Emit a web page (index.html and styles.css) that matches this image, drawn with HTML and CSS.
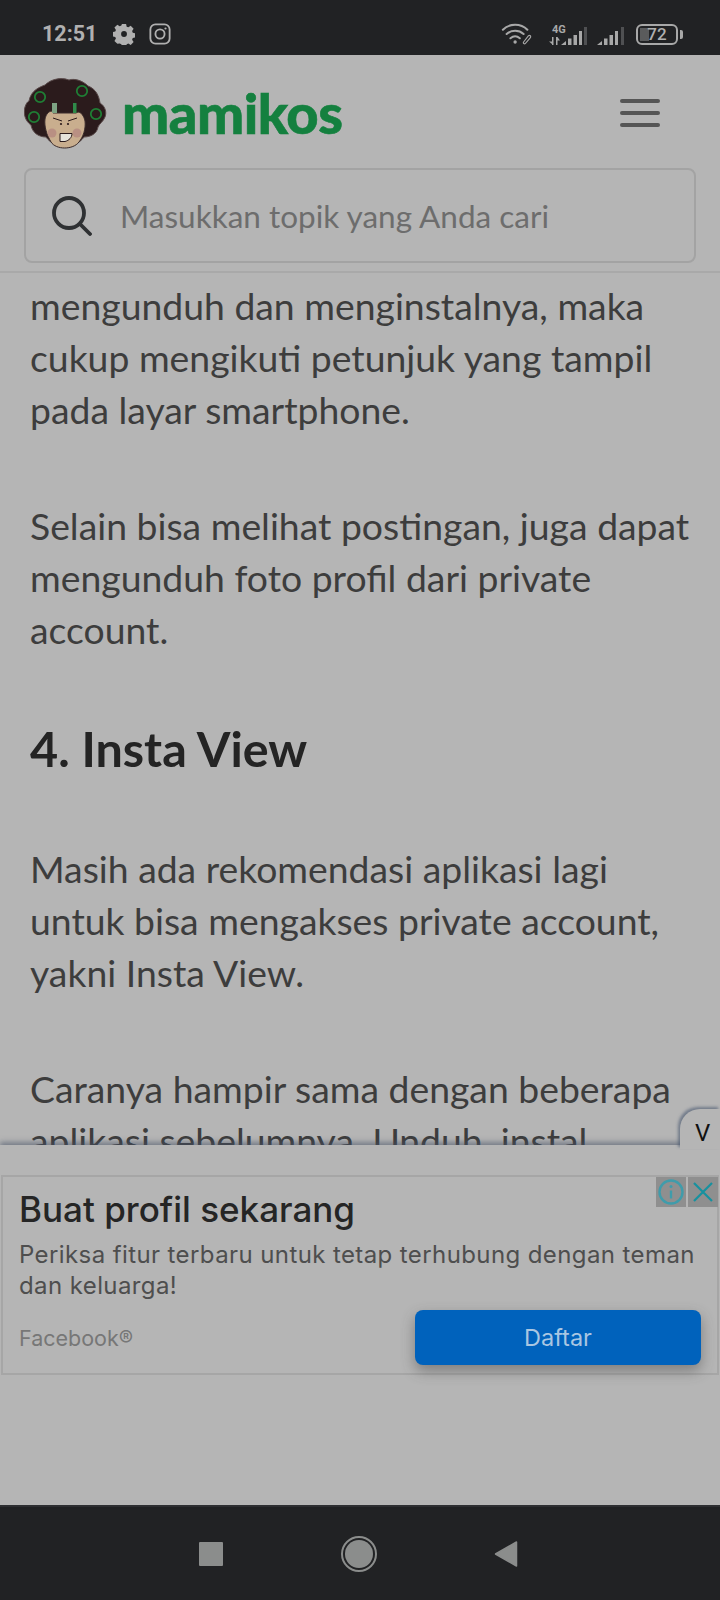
FILE: index.html
```html
<!DOCTYPE html>
<html lang="id">
<head>
<meta charset="utf-8">
<title>Mamikos</title>
<link rel="stylesheet" href="styles.css">
</head>
<body>
<div class="phone">
  <div class="status">
    <div class="status-left">
      <span class="clock">12:51</span>
      <svg class="ic-gear" width="22" height="22" viewBox="0 0 24 24"><path fill="#b0b0b0" fill-rule="evenodd" d="M9.500 0h5l.7 3.200 2 .8 2.800-1.800 3.500 3.500-1.800 2.800.8 2 3.200.7v5l-3.200.7-.8 2 1.800 2.800-3.500 3.500-2.800-1.800-2 .8-.7 3.200h-5l-.7-3.200-2-.8L4 23.800.500 20.300l1.800-2.800-.8-2L-1.700 14.800v-5l3.200-.7.8-2L.500 4.300 4 .800l2.800 1.800 2-.8zM12 8.500a3.500 3.500 0 1 0 0 7 3.500 3.500 0 0 0 0-7z" transform="translate(1.100 1.100) scale(.91)"/></svg>
      <svg class="ic-insta" width="22" height="22" viewBox="0 0 24 24" fill="none" stroke="#b0b0b0" stroke-width="2"><rect x="1.500" y="1.500" width="21" height="21" rx="5.500"/><circle cx="12" cy="12" r="5"/><circle cx="18" cy="6" r="1.200" fill="#b0b0b0" stroke="none"/></svg>
    </div>
    <div class="status-right">
      <svg class="wifi" width="32" height="22" viewBox="0 0 34 23" fill="none" stroke="#a8a8a8" stroke-width="2.200" stroke-linecap="round"><path d="M2 7c7-7 19-7 26 0"/><path d="M6 11.500c5-4.500 13-4.500 18 0"/><path d="M10 16c3-2.500 7-2.500 10 0"/><circle cx="15" cy="20" r="1.800" fill="#a8a8a8" stroke="none"/><path stroke-width="1.200" d="M24 20l5-6.500c1.500-1.500 3.500.5 2 2l-5 6c-1.200 1.200-2.800-.3-2-1.500z"/></svg>
      <div class="signal-4g">
        <span class="tag-4g">4G</span>
        <svg width="38" height="20" viewBox="0 0 38 20"><path fill="#a8a8a8" d="M3 11h1.500v8H3zM0 15.500h3v2.500zM7 11h1.500v8H7zM8.500 11l2.500 3.500H8.500z"/><path fill="#a8a8a8" d="M12 19l5-4v4zM19 12.500h3.500V19H19zM24.500 9h3.500v10h-3.500zM30 5h3v14h-3z"/><rect x="35" y="1" width="3" height="18" fill="#4f5052"/></svg>
      </div>
      <svg class="signal" width="27" height="20" viewBox="0 0 27 20"><path fill="#a8a8a8" d="M0 19l5-4v4zM7 12.500h3.500V19H7zM12.500 9H16v10h-3.500zM18 5h3v14h-3z"/><rect x="24" y="1" width="3" height="18" fill="#4f5052"/></svg>
      <div class="battery"><span class="battery-fill"></span><span class="battery-num">72</span></div>
      <span class="battery-tip"></span>
    </div>
  </div>

  <header class="site-header">
    <div class="brand-row">
      <div class="brand">
        <svg class="mascot" width="84" height="72" viewBox="0 0 84 72">
          <path fill="#2b1b1c" stroke="#5a4a4a" stroke-width="1" d="M5 24C7 13 16 10 21 8 27 2 37 0 45 3 51 1 59 4 64 9 72 12 75 19 76 26 81 29 83 35 81 40 79 45 75 47 74 50 73 57 66 60 60 60 52 72 30 72 22 60 14 60 8 55 7 48 1 44-1 36 1 30 2 27 3 25 5 24Z"/>
          <path fill="#c9ae8e" stroke="#3a2b2b" stroke-width="1" d="M21 42C22 37 25 34 28 34L29 36H52L54 35C57 35 60 39 61 44 62 52 59 60 55 65 49 73 32 73 27 65 23 58 20 50 21 42Z"/>
          <rect x="28" y="26" width="5" height="10" fill="#7da383"/>
          <rect x="49" y="26" width="3.500" height="10" fill="#2f8a49"/>
          <circle cx="16" cy="20" r="5.200" fill="none" stroke="#1f7f35" stroke-width="1.800"/>
          <circle cx="58" cy="14" r="5.200" fill="none" stroke="#1f7f35" stroke-width="1.800"/>
          <circle cx="10" cy="40" r="5.200" fill="none" stroke="#1f7f35" stroke-width="1.800"/>
          <circle cx="72" cy="37" r="5.200" fill="none" stroke="#1f7f35" stroke-width="1.800"/>
          <circle cx="28" cy="56" r="4.500" fill="#b99083"/>
          <circle cx="53" cy="56" r="4.500" fill="#b99083"/>
          <path fill="none" stroke="#2b1b1c" stroke-width="1" d="M29 41l9 3M44 44l9-3"/>
          <circle cx="37" cy="47" r="1.100" fill="#2b1b1c"/><circle cx="44" cy="47" r="1.100" fill="#2b1b1c"/>
          <path fill="#e6e3da" stroke="#2b1b1c" stroke-width="1" d="M36 56.500h12c0 4-3 7-7 8h-5z"/>
        </svg>
        <span class="wordmark">mamikos</span>
      </div>
      <div class="burger"><span></span><span></span><span></span></div>
    </div>
    <div class="search">
      <svg width="40" height="40" viewBox="0 0 40 40" fill="none" stroke="#2f3133" stroke-width="3.800" stroke-linecap="round"><circle cx="17" cy="17" r="15"/><path d="M28.500 28.500l9.500 9.500"/></svg>
      <span class="search-text">Masukkan topik yang Anda cari</span>
    </div>
  </header>

  <main class="article">
    <p>mengunduh dan menginstalnya, maka cukup mengikuti petunjuk yang tampil pada layar smartphone.</p>
    <p>Selain bisa melihat postingan, juga dapat mengunduh foto profil dari private account.</p>
    <h2>4. Insta View</h2>
    <p>Masih ada rekomendasi aplikasi lagi untuk bisa mengakses private account, yakni Insta View.</p>
    <p>Caranya hampir sama dengan beberapa aplikasi sebelumnya. Unduh, instal</p>
  </main>

  <section class="sheet">
    <div class="toggle">V</div>
    <div class="ad">
      <div class="ad-controls">
        <span class="ad-btn"><svg width="26" height="26" viewBox="0 0 26 26" fill="none" stroke="#3f9cab" stroke-width="2.400"><circle cx="13" cy="13" r="11.500"/><path d="M13 11.500v8"/><circle cx="13" cy="7.500" r="1.500" fill="#3f9cab" stroke="none"/></svg></span>
        <span class="ad-btn"><svg width="20" height="20" viewBox="0 0 20 20" fill="none" stroke="#17919f" stroke-width="2.200"><path d="M1 1l18 18M19 1L1 19"/></svg></span>
      </div>
      <h3 class="ad-title">Buat profil sekarang</h3>
      <p class="ad-body">Periksa fitur terbaru untuk tetap terhubung dengan teman dan keluarga!</p>
      <div class="ad-foot">
        <span class="ad-brand">Facebook®</span>
        <span class="ad-cta">Daftar</span>
      </div>
    </div>
  </section>

  <nav class="navbar">
    <span class="nav-square"></span>
    <span class="nav-home"><span></span></span>
    <svg width="24" height="26" viewBox="0 0 24 26"><path fill="#8b8d8c" stroke="#8b8d8c" stroke-width="1.500" stroke-linejoin="round" d="M1.500 13L22.500 1v24z"/></svg>
  </nav>
</div>
</body>
</html>
```

FILE: styles.css
```css
* { box-sizing: border-box; }
html, body { margin: 0; padding: 0; }
body { background: #b5b5b5; font-family: "Lato", "Liberation Sans", sans-serif; }
.phone { width: 720px; height: 1600px; display: flex; flex-direction: column; overflow: hidden; position: relative; background: #b5b5b5; }

.status { height: 55px; flex: none; background: #212224; display: flex; justify-content: space-between; align-items: center; padding: 13px 37px 0 42px; }
.status-left, .status-right { display: flex; align-items: center; }
.clock { font: 700 21.500px/1 "Roboto", sans-serif; color: #b0b0b0; margin-right: 16px; }
.ic-insta { margin-left: 14px; }
.status-right { align-items: flex-end; height: 24px; }
.wifi { margin-bottom: 1px; }
.signal-4g { position: relative; margin-left: 16px; height: 20px; }
.tag-4g { position: absolute; left: 3px; top: -2px; font: 700 11px/1 "Roboto", sans-serif; color: #a8a8a8; }
.signal { margin-left: 10px; }
.battery { width: 42px; height: 21px; margin: 0 0 1px 12px; border: 2.500px solid #a8a8a8; border-radius: 6px; position: relative; }
.battery-fill { position: absolute; left: 2px; top: 2px; bottom: 2px; width: 9px; background: #5a5b5c; }
.battery-num { position: absolute; left: 0; right: 0; top: 0; text-align: center; font: 500 17px/16px "Roboto", sans-serif; color: #b0b0b0; }
.battery-tip { width: 3px; height: 9px; background: #a8a8a8; margin: 0 0 7px 2px; border-radius: 0 2px 2px 0; }

.site-header { height: 218px; flex: none; border-bottom: 2px solid #a9a9a9; padding: 22px 24px 0; }
.brand-row { display: flex; justify-content: space-between; align-items: center; height: 72px; }
.brand { display: flex; align-items: center; }
.mascot { flex: none; }
.wordmark { margin-left: 14px; font: 900 56px/1 "Lato", sans-serif; color: #14803f; letter-spacing: -0.5px; -webkit-text-stroke: 0.6px #14803f; }
.burger { display: flex; flex-direction: column; gap: 8px; margin-right: 36px; }
.burger span { display: block; width: 40px; height: 4px; border-radius: 2px; background: #555; }
.search { margin-top: 19px; height: 95px; border: 2px solid #a3a3a3; border-radius: 8px; display: flex; align-items: center; padding-left: 26px; gap: 28px; }
.search-text { font-size: 31.500px; color: #6d6d6d; }

.article { height: 872px; flex: none; overflow: hidden; padding: 7px 30px 0; color: #3d3d3d; }
.article p { margin: 0 0 64px; font-size: 37.330px; line-height: 52px; }
.article h2 { margin: 0 0 67px; font-size: 48.500px; font-weight: 700; line-height: 56px; color: #242424; }

.sheet { height: 360px; flex: none; background: #b5b5b5; position: relative; box-shadow: 0 -3px 5px rgba(70,80,100,.55); padding: 30px 1px 0; }
.toggle { position: absolute; right: 0; top: -36px; width: 40px; height: 40px; padding: 12px 0 0 15px; background: #b5b5b5; border-radius: 20px 0 0 0; box-shadow: -2px -2px 3px rgba(70,85,110,.6); font: 400 24px/1 "Roboto", sans-serif; color: #111; }
.ad { height: 200px; border: 2px solid #a6a6a6; position: relative; padding: 11px 0 0 16px; font-family: "Inter", "Noto Sans", sans-serif; }
.ad-controls { position: absolute; right: -1px; top: 0; display: flex; gap: 2px; }
.ad-btn { width: 30px; height: 30px; background: #8f8f8f; display: flex; align-items: center; justify-content: center; }
.ad-title { margin: 0; font-size: 35px; line-height: 42px; font-weight: 500; color: #252525; }
.ad-body { margin: 9px 0 0; font-size: 24px; line-height: 31px; color: #4e4e4e; letter-spacing: .4px; width: 695px; }
.ad-foot { display: flex; justify-content: space-between; align-items: center; margin-top: 9px; padding-right: 16px; }
.ad-brand { font-size: 21.500px; color: #777; }
.ad-cta { width: 286px; height: 55px; border-radius: 8px; background: #0062bc; color: #a9c6e2; font-size: 23.500px; display: flex; align-items: center; justify-content: center; box-shadow: 0 6px 14px rgba(60,60,60,.45); }

.navbar { height: 96px; flex: none; background: #212224; border-top: 2px solid #2e2f31; display: flex; align-items: center; justify-content: space-between; padding: 0 202px 0 199px; }
.nav-square { width: 24px; height: 24px; border-radius: 1px; background: #8b8d8c; }
.nav-home { width: 36px; height: 36px; border-radius: 50%; border: 2px solid #8b8d8c; padding: 2px; }
.nav-home span { display: block; width: 100%; height: 100%; border-radius: 50%; background: #8b8d8c; }
```
